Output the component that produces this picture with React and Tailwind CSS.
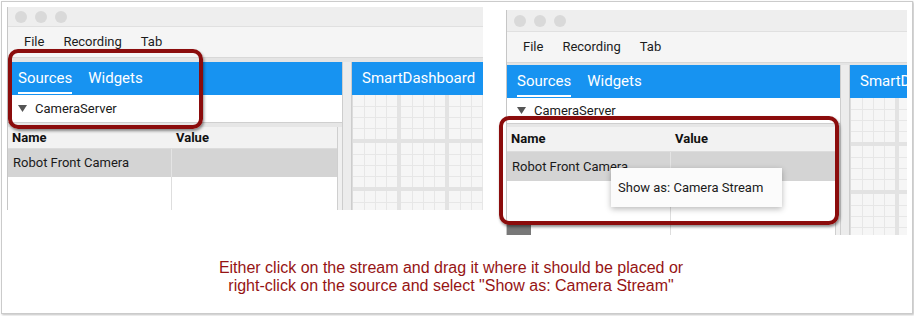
import React from 'react';

const ui = { fontFamily: 'Roboto, "Noto Sans", sans-serif' };

function Dots() {
  return (
    <div className="flex items-center gap-[8px] pl-[7px]">
      <span className="w-3 h-3 rounded-full bg-[#d9d9d9]" />
      <span className="w-3 h-3 rounded-full bg-[#d9d9d9]" />
      <span className="w-3 h-3 rounded-full bg-[#d9d9d9]" />
    </div>
  );
}

function Grid() {
  return (
    <svg className="w-full h-full block" xmlns="http://www.w3.org/2000/svg">
      <defs>
        <pattern id="cells" width="48" height="48" patternUnits="userSpaceOnUse">
          <rect width="48" height="48" fill="#f6f6f6" />
          <path d="M11.5 0V44M22.5 0V44M33.5 0V44M0 11.5H44M0 22.5H44M0 33.5H44" stroke="#e7e7e7" strokeWidth="1" />
          <rect x="44" y="0" width="4" height="48" fill="#e3e3e3" />
          <rect x="0" y="44" width="48" height="4" fill="#e3e3e3" />
        </pattern>
      </defs>
      <rect width="100%" height="100%" fill="url(#cells)" />
    </svg>
  );
}

function Window({ cls, titleCls, bandCls, panelCls, dashCls, treeCls, sepCls, headCls, rowCls, footer, children }) {
  return (
    <div className={`relative flex flex-col border-l border-[#c6c6c6] bg-[#e9e9e9] ${cls}`} style={ui}>
      <div className={`flex items-center bg-[#eeeeee] border-b border-[#e0e0e0] ${titleCls}`}>
        <Dots />
      </div>
      <div className="flex items-center h-[30px] bg-[#f5f5f5] pl-[16px] gap-[19px] text-[13px] text-[#1c1c1c]">
        <span>File</span>
        <span>Recording</span>
        <span>Tab</span>
      </div>
      <div className={`bg-[#e4e4e4] border-t border-[#d8d8d8] ${bandCls}`} />
      <div className="flex flex-1 min-h-0">
        <div className={`flex flex-col ${panelCls}`}>
          <div className="h-[33px] bg-[#1793f1] flex items-center pl-[10px] gap-[16px] text-[15px] text-white">
            <span className="relative pb-[1px]">
              Sources
              <span className="absolute left-0 right-0 bottom-[-4px] h-[2px] bg-white" />
            </span>
            <span>Widgets</span>
          </div>
          <div className={`bg-white flex items-center pl-[10px] text-[13px] text-[#1a1a1a] ${treeCls}`}>
            <svg width="9" height="7" viewBox="0 0 9 7" className="mr-[8px]">
              <path d="M0 0H9L4.5 7Z" fill="#555" />
            </svg>
            <span>CameraServer</span>
          </div>
          <div className={`bg-[#e6e6e6] border-t border-[#cfcfcf] ${sepCls}`} />
          <div className="flex flex-1 min-h-0">
            <div className="flex flex-col flex-1 bg-white">
              <div className={`flex items-center bg-[#f2f2f2] border-b border-[#dcdcdc] text-[13px] font-bold text-[#111] ${headCls}`}>
                <span className="w-[164px] pl-[4px]">Name</span>
                <span className="pl-[4px]">Value</span>
              </div>
              <div className={`flex bg-[#d4d4d4] text-[13px] text-[#1a1a1a] ${rowCls}`}>
                <span className="w-[164px] pl-[5px] flex items-center border-r border-[#e4e4e4]">Robot Front Camera</span>
                <span className="flex-1" />
              </div>
              <div className="flex flex-1">
                <div className="w-[164px] border-r border-[#dedede] flex flex-col">
                  {footer && <div className="mt-auto w-[24px] h-[12px] bg-[#787878]" />}
                </div>
                <div className="flex-1" />
              </div>
            </div>
            <div className="w-[5px] bg-[#f0f0f0] border-l border-[#cfcfcf]" />
          </div>
        </div>
        <div className="w-[10px] bg-[#ececec] border-x border-[#cdcdcd]" />
        <div className={`flex flex-col overflow-hidden ${dashCls}`}>
          <div className="h-[33px] bg-[#1793f1] flex items-center pl-[10px] text-[15px] text-white whitespace-nowrap">
            SmartDashboard
          </div>
          <div className="flex-1 min-h-0 border-l border-[#dcdcdc]">
            <Grid />
          </div>
        </div>
      </div>
      {children}
    </div>
  );
}

const redBox = 'absolute border-[4px] border-[#8b0c0c] rounded-[10px] shadow-[1px_2px_3px_rgba(0,0,0,0.45)]';

export default function App() {
  return (
    <div className="w-[914px] h-[316px] bg-white overflow-hidden">
      <div className="ml-[1px] mt-[1px] w-[912px] h-[313px] border border-[#cbcbcb] shadow-[1px_1px_2px_rgba(0,0,0,0.25)] flex flex-col">
        <div className="flex items-start gap-[23px] pl-[5px] pt-[5px]">
          <Window
            cls="w-[476px] h-[203px]"
            titleCls="h-[20px]"
            bandCls="h-[5px]"
            panelCls="w-[334px]"
            dashCls="w-[131px]"
            treeCls="h-[27px]"
            sepCls="h-[5px]"
            headCls="h-[22px]"
            rowCls="h-[28px]"
          >
            <div className={`${redBox} left-[0px] top-[42px] w-[195px] h-[80px]`} />
          </Window>
          <Window
            cls="w-[401px] h-[225px] mt-[3px]"
            titleCls="h-[22px]"
            bandCls="h-[3px]"
            panelCls="w-[333px]"
            dashCls="w-[57px]"
            treeCls="h-[25px]"
            sepCls="h-[4px]"
            headCls="h-[25px]"
            rowCls="h-[29px]"
            footer
          >
            <div className={`${redBox} left-[-8px] top-[106px] w-[340px] h-[109px]`} />
            <div className="absolute left-[104px] top-[158px] w-[171px] h-[39px] bg-[#fbfbfb] shadow-[0_2px_6px_rgba(0,0,0,0.28)] flex items-center pl-[7px] text-[13px] text-[#1a1a1a]">
              Show as: Camera Stream
            </div>
          </Window>
        </div>
        <div
          className="mt-[24px] pr-[12px] text-center text-[16px] leading-[18px] text-[#961414]"
          style={{ fontFamily: '"Liberation Sans", Arial, sans-serif' }}
        >
          <div>Either click on the stream and drag it where it should be placed or</div>
          <div>right-click on the source and select "Show as: Camera Stream"</div>
        </div>
      </div>
    </div>
  );
}
